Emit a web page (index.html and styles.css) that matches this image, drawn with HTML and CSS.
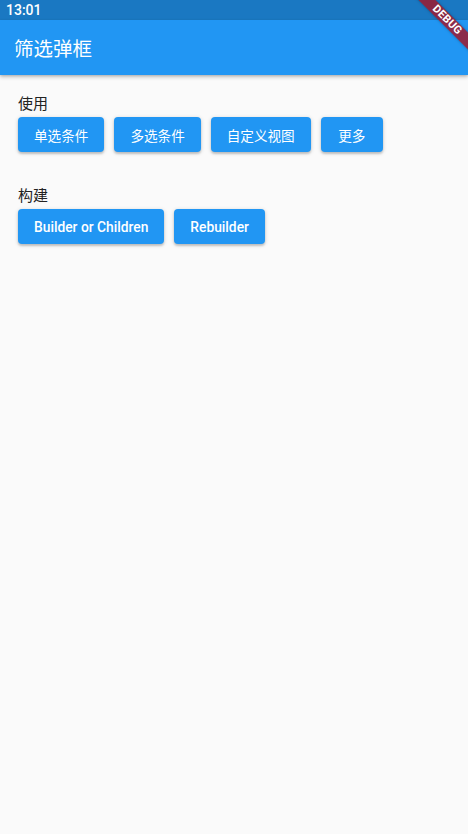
FILE: index.html
```html
<!DOCTYPE html>
<html>
<head>
<meta charset="utf-8">
<link rel="stylesheet" href="styles.css">
</head>
<body>
<div class="screen">
  <div class="statusbar"><span class="time">13:01</span></div>
  <header class="appbar"><h1 class="title">筛选弹框</h1></header>
  <main class="content">
    <section class="section">
      <div class="label">使用</div>
      <div class="buttons">
        <button class="btn">单选条件</button>
        <button class="btn">多选条件</button>
        <button class="btn">自定义视图</button>
        <button class="btn">更多</button>
      </div>
    </section>
    <section class="section">
      <div class="label">构建</div>
      <div class="buttons">
        <button class="btn btn-en">Builder or Children</button>
        <button class="btn btn-en">Rebuilder</button>
      </div>
    </section>
  </main>
  <div class="banner"><span>DEBUG</span></div>
</div>
</body>
</html>
```

FILE: styles.css
```css
* { box-sizing: border-box; }
html, body { margin: 0; padding: 0; }
body {
  width: 468px;
  height: 834px;
  background: #fafafa;
  font-family: Roboto, "Noto Sans CJK SC", sans-serif;
  overflow: hidden;
}
.screen {
  position: relative;
  width: 468px;
  height: 834px;
  display: flex;
  flex-direction: column;
  overflow: hidden;
}
.statusbar {
  height: 20px;
  background: #1a78c2;
  color: #fff;
  display: flex;
  align-items: center;
  padding-left: 6px;
}
.time {
  font-family: Roboto, sans-serif;
  font-size: 14px;
  font-weight: 500;
  line-height: 20px;
}
.appbar {
  height: 55px;
  background: #2196f3;
  display: flex;
  align-items: center;
  padding-left: 14px;
  box-shadow: 0 2px 4px rgba(0,0,0,0.22), 0 1px 2px rgba(0,0,0,0.12);
  position: relative;
  z-index: 1;
}
.title {
  margin: 0;
  color: #fff;
  font-family: "Noto Sans CJK SC", sans-serif;
  font-weight: 400;
  font-size: 19.5px;
  line-height: 24px;
}
.content {
  padding: 18px 18px 0 18px;
  display: flex;
  flex-direction: column;
  gap: 33px;
}
.section {
  display: flex;
  flex-direction: column;
  gap: 4px;
}
.label {
  font-family: "Noto Sans CJK SC", sans-serif;
  font-size: 15px;
  line-height: 20px;
  color: #222;
}
.buttons {
  display: flex;
  gap: 10px;
}
.btn {
  height: 35px;
  min-width: 62px;
  padding: 0 16px;
  border: none;
  border-radius: 4px;
  background: #2196f3;
  color: #fff;
  font-family: "Noto Sans CJK SC", sans-serif;
  font-size: 13.6px;
  font-weight: 400;
  box-shadow: 0 2px 2px rgba(0,0,0,0.14), 0 1px 4px rgba(0,0,0,0.18);
}
.btn-en {
  font-family: Roboto, sans-serif;
  font-weight: 500;
  font-size: 13.8px;
  padding: 0 16px;
}
.banner {
  position: absolute;
  left: 387px;
  top: 14px;
  width: 120px;
  height: 12px;
  background: rgba(158, 25, 45, 0.85);
  transform: rotate(45deg);
  display: flex;
  align-items: center;
  justify-content: center;
  z-index: 2;
  box-shadow: 0 0 3px rgba(0,0,0,0.3);
}
.banner span {
  color: #fff;
  font-family: Roboto, sans-serif;
  font-weight: 700;
  font-size: 11px;
  line-height: 12px;
  letter-spacing: 0.3px;
}
```
